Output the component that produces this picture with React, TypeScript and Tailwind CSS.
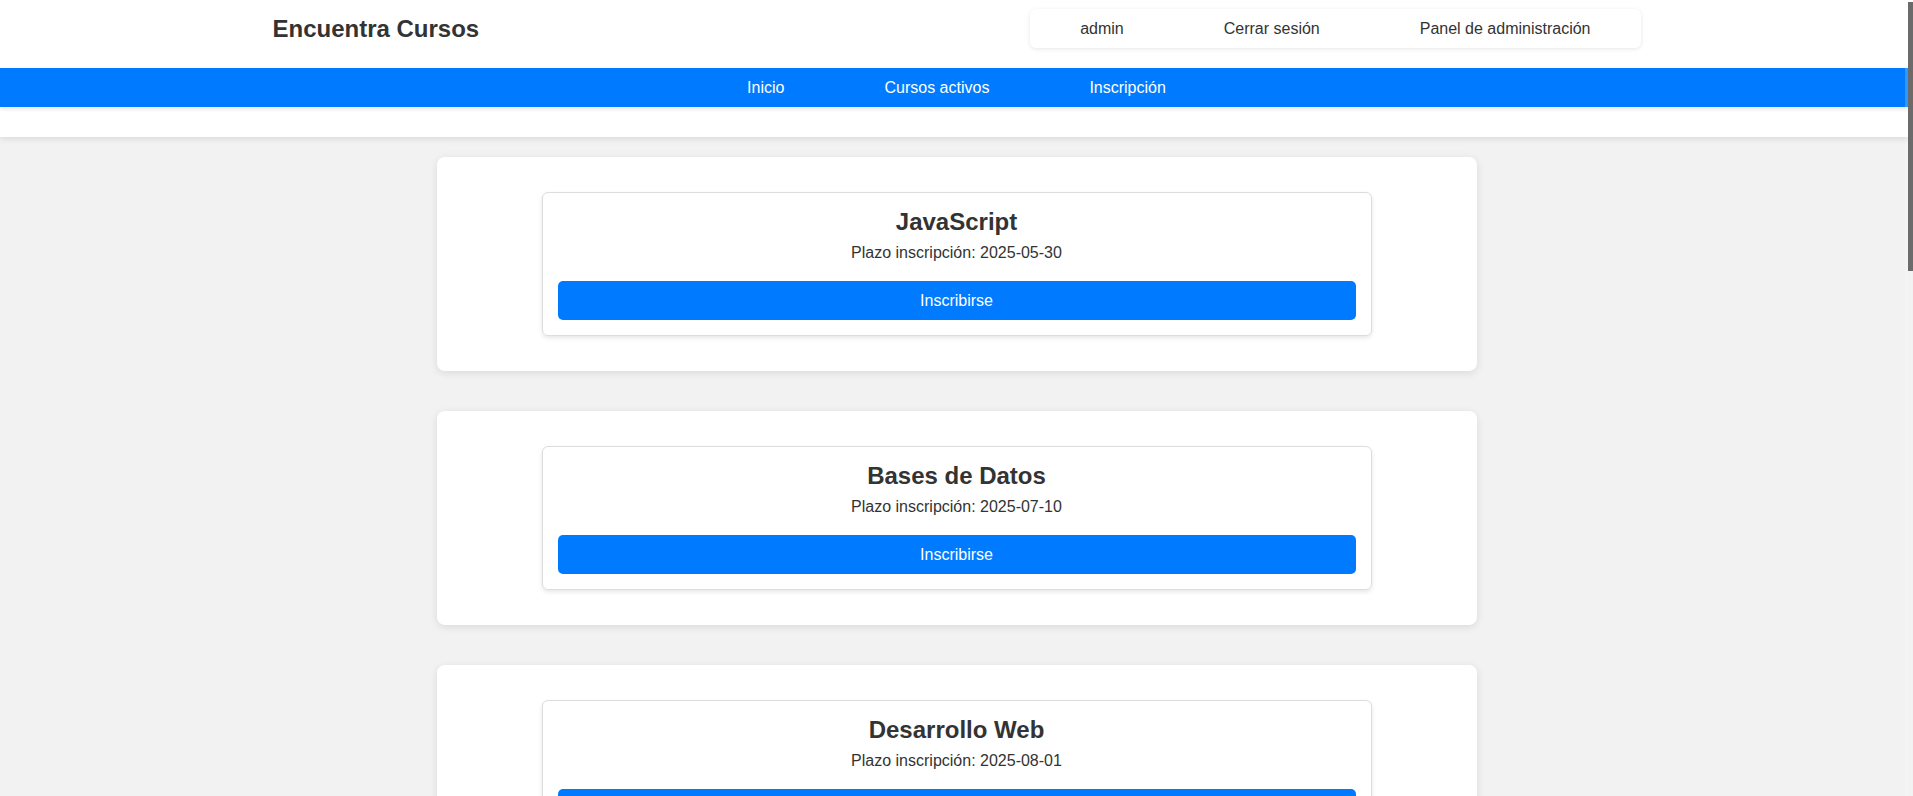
const courses = [
  { name: "JavaScript", deadline: "2025-05-30" },
  { name: "Bases de Datos", deadline: "2025-07-10" },
  { name: "Desarrollo Web", deadline: "2025-08-01" },
  { name: "Python", deadline: "2025-08-20" },
  { name: "Java", deadline: "2025-09-05" },
  { name: "Redes", deadline: "2025-09-18" },
  { name: "Diseño UX/UI", deadline: "2025-10-02" },
  { name: "Ciberseguridad", deadline: "2025-10-20" },
];

export default function App() {
  return (
    <div className="min-h-screen bg-[#f2f2f2] text-[#333] leading-[normal] font-['Liberation_Sans',Arial,sans-serif]">
      {/* overlay scrollbar as shown in the capture */}
      <div className="fixed top-0 right-0 h-screen w-[8px] flex z-10">
        <div className="w-[3px] h-full bg-white/20" />
        <div className="w-[5px] h-full pt-[2px]">
          <div className="h-[269px] bg-[#6b6b6b]" />
        </div>
      </div>

      <header className="bg-white pb-[30px] shadow-[0_2px_6px_rgba(0,0,0,0.1)]">
        <div className="max-w-[1400px] mx-auto px-4 h-[68px] flex justify-between items-start pt-[9px]">
          <h1 className="h-[39px] flex items-center text-2xl leading-[normal] font-bold">
            Encuentra Cursos
          </h1>
          <div className="flex items-center h-[39px] bg-white rounded-md shadow-[0_1px_4px_rgba(0,0,0,0.1)]">
            <a className="px-[50px] cursor-pointer">admin</a>
            <a className="px-[50px] cursor-pointer">Cerrar sesión</a>
            <a className="px-[50px] cursor-pointer">Panel de administración</a>
          </div>
        </div>
        <nav className="bg-[#007bff] h-[39px] flex justify-center items-center text-white shadow-[0_2px_4px_rgba(0,0,0,0.1)]">
          <a className="px-[50px] cursor-pointer">Inicio</a>
          <a className="px-[50px] cursor-pointer">Cursos activos</a>
          <a className="px-[50px] cursor-pointer">Inscripción</a>
        </nav>
      </header>

      <main className="pt-5 flex flex-col items-center gap-10 pb-10">
        {courses.map((c) => (
          <section
            key={c.name}
            className="w-[1040px] bg-white rounded-lg py-[35px] shadow-[0_2px_8px_rgba(0,0,0,0.1)]"
          >
            <div className="w-[830px] mx-auto border border-[#ddd] rounded-md p-[15px] text-center shadow-[0_2px_4px_rgba(0,0,0,0.1)]">
              <h2 className="text-2xl leading-[normal] font-bold">{c.name}</h2>
              <p className="mt-2">Plazo inscripción: {c.deadline}</p>
              <button className="mt-[19px] w-full h-[39px] bg-[#007bff] text-white rounded-[5px] cursor-pointer">
                Inscribirse
              </button>
            </div>
          </section>
        ))}
      </main>
    </div>
  );
}
